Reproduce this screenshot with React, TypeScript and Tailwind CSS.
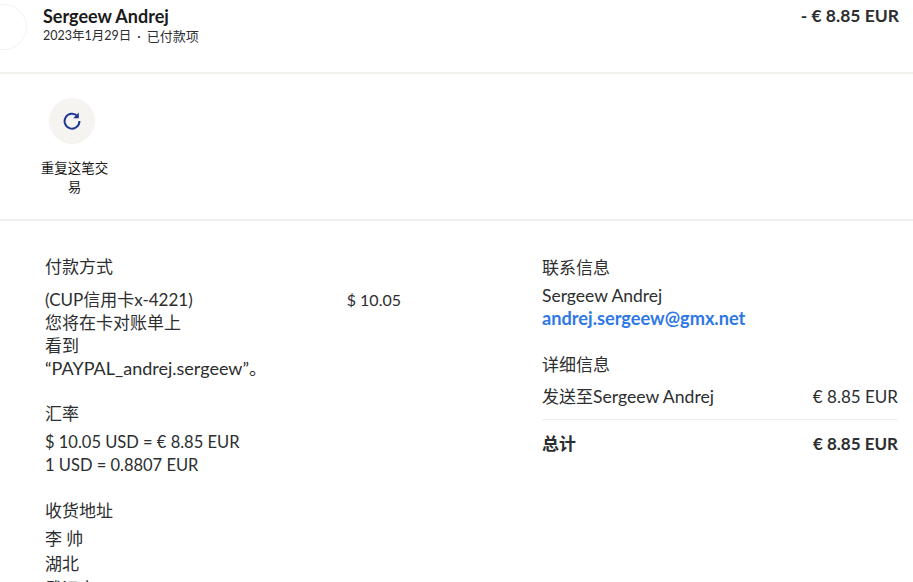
import React from 'react';

const font = "font-['Lato','Noto_Sans_CJK_SC',sans-serif]";

const Heading = ({ children }: { children: React.ReactNode }) => (
  <h3 className="text-[17px] leading-6 font-normal text-[#2c2e2f]">{children}</h3>
);

const App: React.FC = () => {
  return (
    <div className={`${font} w-[913px] h-[582px] overflow-hidden bg-white text-[#2c2e2f]`}>
      {/* Header */}
      <div className="h-[74px] border-b-2 border-[#f1f0ec] flex items-start justify-between pl-[43px] pr-[14px] pt-[6px] relative">
        <div className="absolute -left-[19px] top-[4px] w-[46px] h-[46px] rounded-full border border-[#f6f0f2]" />
        <div>
          <div className="text-[18px] leading-[20px] font-bold text-[#1a1a1a]">Sergeew Andrej</div>
          <div className="text-[13px] leading-[20px] flex gap-[6px]">
            <span className="text-[12.5px]">2023年1月29日</span>
            <span>·</span>
            <span>已付款项</span>
          </div>
        </div>
        <div className="text-[17.5px] leading-[20px] font-bold">- € 8.85 EUR</div>
      </div>

      {/* Actions */}
      <div className="h-[147px] border-b-2 border-[#f1f0ec] pt-[24px] pl-[37px]">
        <div className="w-[75px] flex flex-col items-center">
          <div className="w-[46px] h-[46px] mr-[5px] rounded-full bg-[#f5f4f0] flex items-center justify-center">
            <svg viewBox="0 0 18 18" className="w-[18px] h-[18px]" fill="none">
              <path d="M14.6 4.4A7.4 7.4 0 1 0 16.4 9" stroke="#1f3a93" strokeWidth="2" />
              <path d="M15.8 0.6V6.2H10.2Z" fill="#1f3a93" />
            </svg>
          </div>
          <div className="mt-[15px] text-[13.5px] leading-[19px] text-center w-[70px] text-[#1a1a1a]">重复这笔交易</div>
        </div>
      </div>

      {/* Details */}
      <div className="flex pt-[34px] pl-[45px] pr-[15px]">
        <div className="w-[497px] shrink-0">
          <Heading>付款方式</Heading>
          <div className="flex w-[356px] justify-between text-[17px] leading-[23px] mt-[9px]">
            <div className="w-[150px]">
              (CUP信用卡x-4221) 您将在卡对账单上看到 <span className="text-[18px]">“PAYPAL_andrej.sergeew”。</span>
            </div>
            <div className="text-[16px]">$ 10.05</div>
          </div>
          <div className="mt-[22px]">
            <Heading>汇率</Heading>
            <div className="text-[16.5px] leading-[23px] mt-[5px]">
              <div>$ 10.05 USD = € 8.85 EUR</div>
              <div>1 USD = 0.8807 EUR</div>
            </div>
          </div>
          <div className="mt-[22px]">
            <Heading>收货地址</Heading>
            <div className="text-[17px] leading-[25px] mt-[3px]">
              <div>李 帅</div>
              <div>湖北</div>
              <div>武汉市</div>
            </div>
          </div>
        </div>
        <div className="flex-1 pt-[1px]">
          <Heading>联系信息</Heading>
          <div className="text-[17.5px] leading-[23px] mt-[4px]">
            <div>Sergeew Andrej</div>
            <div className="font-bold text-[18.2px] text-[#2e78e6]">andrej.sergeew@gmx.net</div>
          </div>
          <div className="mt-[23px]">
            <Heading>详细信息</Heading>
          </div>
          <div className="flex justify-between text-[17px] leading-[23px] pb-[11px] mt-[8px] border-b border-[#eeeeee]">
            <span>发送至<span className="text-[17.6px]">Sergeew Andrej</span></span>
            <span>€ 8.85 EUR</span>
          </div>
          <div className="flex justify-between text-[17px] leading-[23px] font-bold mt-[12px]">
            <span>总计</span>
            <span>€ 8.85 EUR</span>
          </div>
        </div>
      </div>
    </div>
  );
};

export default App;
